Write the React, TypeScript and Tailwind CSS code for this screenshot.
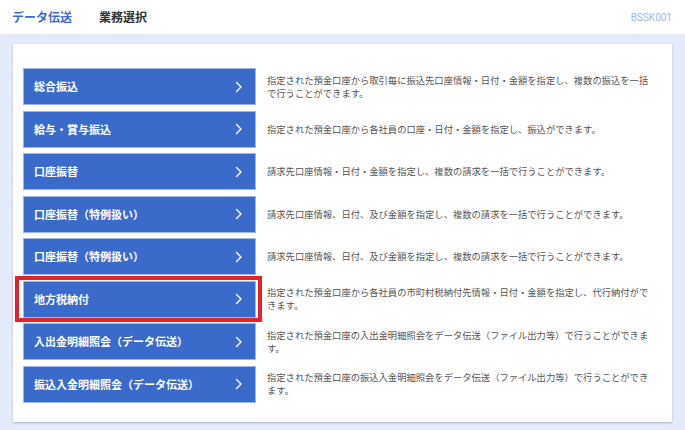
import React from "react";

const items = [
  {
    label: "総合振込",
    desc: "指定された預金口座から取引毎に振込先口座情報・日付・金額を指定し、複数の振込を一括で行うことができます。",
  },
  {
    label: "給与・賞与振込",
    desc: "指定された預金口座から各社員の口座・日付・金額を指定し、振込ができます。",
  },
  {
    label: "口座振替",
    desc: "請求先口座情報・日付・金額を指定し、複数の請求を一括で行うことができます。",
  },
  {
    label: "口座振替（特例扱い）",
    desc: "請求先口座情報、日付、及び金額を指定し、複数の請求を一括で行うことができます。",
  },
  {
    label: "口座振替（特例扱い）",
    desc: "請求先口座情報、日付、及び金額を指定し、複数の請求を一括で行うことができます。",
  },
  {
    label: "地方税納付",
    desc: "指定された預金口座から各社員の市町村税納付先情報・日付・金額を指定し、代行納付ができます。",
    selected: true,
  },
  {
    label: "入出金明細照会（データ伝送）",
    desc: "指定された預金口座の入出金明細照会をデータ伝送（ファイル出力等）で行うことができます。",
  },
  {
    label: "振込入金明細照会（データ伝送）",
    desc: "指定された預金口座の振込入金明細照会をデータ伝送（ファイル出力等）で行うことができます。",
  },
];

function Chevron() {
  return (
    <svg width="8" height="12" viewBox="0 0 8 12" fill="none" className="shrink-0">
      <polyline points="1.5,1.5 6,6 1.5,10.5" stroke="white" strokeWidth="1.4" strokeLinecap="round" strokeLinejoin="round" />
    </svg>
  );
}

export default function App() {
  return (
    <div
      className="w-[685px] h-[430px] overflow-hidden bg-[#e3ebfb]"
      style={{ fontFamily: '"Noto Sans CJK JP", "Noto Sans", sans-serif' }}
    >
      {/* Header */}
      <header className="h-[34px] bg-white flex items-center pl-[12px] pr-[13px]">
        <span className="text-[12px] font-bold text-[#3d6dcb]">データ伝送</span>
        <span className="ml-[27px] text-[12px] font-bold text-[#333]">業務選択</span>
        <span className="ml-auto text-[10px] text-[#a3b5e6]" style={{ fontFamily: '"Roboto", sans-serif' }}>
          BSSK001
        </span>
      </header>

      {/* Card */}
      <div className="px-[13px] pt-[10px]">
        <div className="h-[378px] bg-white shadow-[0_1px_2px_rgba(0,0,0,0.25)] pl-[10px] pt-[24px]">
          <div className="flex flex-col gap-[5.5px]">
            {items.map((item, i) => (
              <div key={i} className="flex items-center">
                <div className="relative">
                  <button className="w-[233px] h-[37px] bg-[#3a6bcb] border border-[#9fb7e6] flex items-center justify-between pl-[10px] pr-[12px] text-left">
                    <span className="text-[11px] font-bold text-white">{item.label}</span>
                    <Chevron />
                  </button>
                  {item.selected && (
                    <div className="absolute left-[-8px] right-[-6px] top-[-5px] bottom-[-4px] border-[4px] border-[#e8202a] pointer-events-none" />
                  )}
                </div>
                <p className="ml-[11px] w-[388px] text-[9.3px] leading-[13px] text-[#555]">{item.desc}</p>
              </div>
            ))}
          </div>
        </div>
      </div>
    </div>
  );
}
